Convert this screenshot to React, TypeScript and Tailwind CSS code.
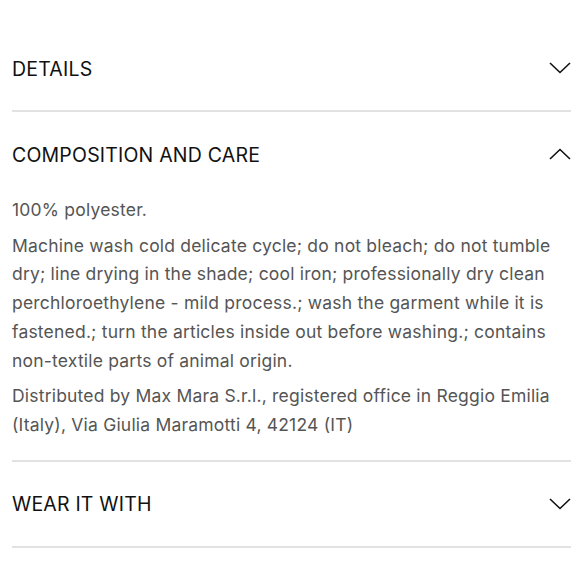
import React from "react";

function Chevron({ up }: { up?: boolean }) {
  return (
    <svg width="22" height="12" viewBox="0 0 22 12" fill="none" className="shrink-0">
      {up ? (
        <path d="M1 11 L11 1.5 L21 11" stroke="#111" strokeWidth="1.6" />
      ) : (
        <path d="M1 1 L11 10.5 L21 1" stroke="#111" strokeWidth="1.6" />
      )}
    </svg>
  );
}

function Header({ title, up }: { title: string; up?: boolean }) {
  return (
    <div className="flex h-[84px] items-center justify-between">
      <span className="pt-[3px] text-[19.5px] leading-none tracking-[0.2px] text-[#111]">{title}</span>
      <Chevron up={up} />
    </div>
  );
}

const lines1 = [
  "Machine wash cold delicate cycle; do not bleach; do not tumble",
  "dry; line drying in the shade; cool iron; professionally dry clean",
  "perchloroethylene - mild process.; wash the garment while it is",
  "fastened.; turn the articles inside out before washing.; contains",
  "non-textile parts of animal origin.",
];
const lines2 = [
  "Distributed by Max Mara S.r.l., registered office in Reggio Emilia",
  "(Italy), Via Giulia Maramotti 4, 42124 (IT)",
];

export default function App() {
  return (
    <div
      className="w-[580px] h-[580px] overflow-hidden bg-white pl-[12px] pr-[9px] pt-[26px]"
      style={{ fontFamily: "Inter, 'Liberation Sans', sans-serif" }}
    >
      <Header title="DETAILS" />
      <div className="h-[2px] bg-[#e2e2e2]" />
      <Header title="COMPOSITION AND CARE" up />
      <div className="flex flex-col gap-[7px] pb-[20px] text-[17.5px] leading-[28.7px] tracking-[0.2px] text-[#555] whitespace-nowrap">
        <p>100% polyester.</p>
        <p>
          {lines1.map((l) => (
            <span key={l} className="block">{l}</span>
          ))}
        </p>
        <p>
          {lines2.map((l) => (
            <span key={l} className="block">{l}</span>
          ))}
        </p>
      </div>
      <div className="h-[2px] bg-[#e2e2e2]" />
      <Header title="WEAR IT WITH" />
      <div className="h-[2px] bg-[#e2e2e2]" />
    </div>
  );
}
